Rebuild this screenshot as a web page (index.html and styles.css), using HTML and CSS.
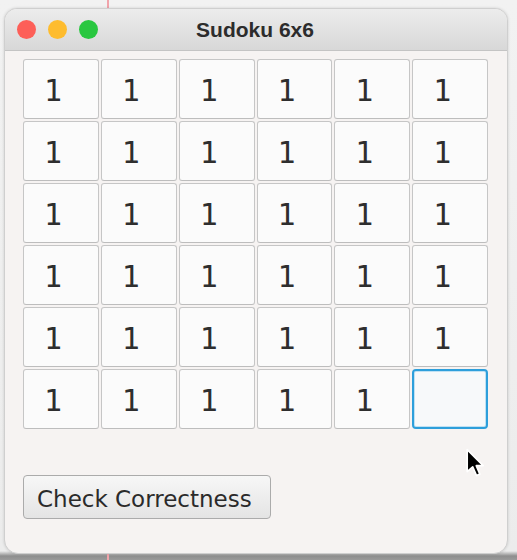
FILE: index.html
```html
<!DOCTYPE html>
<html>
<head>
<meta charset="utf-8">
<link rel="stylesheet" href="styles.css">
</head>
<body>
<div class="guide"></div>
<div class="window">
  <div class="titlebar">
    <div class="lights">
      <span class="light red"></span>
      <span class="light yellow"></span>
      <span class="light green"></span>
    </div>
    <div class="title">Sudoku 6x6</div>
  </div>
  <div class="content">
    <div class="grid">
      <div class="cell">1</div><div class="cell">1</div><div class="cell">1</div><div class="cell">1</div><div class="cell">1</div><div class="cell">1</div>
      <div class="cell">1</div><div class="cell">1</div><div class="cell">1</div><div class="cell">1</div><div class="cell">1</div><div class="cell">1</div>
      <div class="cell">1</div><div class="cell">1</div><div class="cell">1</div><div class="cell">1</div><div class="cell">1</div><div class="cell">1</div>
      <div class="cell">1</div><div class="cell">1</div><div class="cell">1</div><div class="cell">1</div><div class="cell">1</div><div class="cell">1</div>
      <div class="cell">1</div><div class="cell">1</div><div class="cell">1</div><div class="cell">1</div><div class="cell">1</div><div class="cell">1</div>
      <div class="cell">1</div><div class="cell">1</div><div class="cell">1</div><div class="cell">1</div><div class="cell">1</div><div class="cell focused"></div>
    </div>
    <button class="check">Check Correctness</button>
  </div>
  <svg class="cursor" width="22" height="32" viewBox="0 0 20 28">
    <path d="M2 1 L2 21 L7 16.5 L10.5 24.5 L13.5 23.2 L10.2 15.5 L16.5 15.5 Z" fill="#000" stroke="#fff" stroke-width="1.5" stroke-linejoin="round"/>
  </svg>
</div>
</body>
</html>
```

FILE: styles.css
```css
html, body {
  margin: 0;
  padding: 0;
}
body {
  width: 517px;
  height: 560px;
  background: linear-gradient(to bottom, #f2f2f2 0, #ececec 551px, #8e8e8e 556px, #9a9a9a 560px);
  position: relative;
  overflow: hidden;
  padding-top: 8px;
  box-sizing: border-box;
}
.guide {
  position: absolute;
  left: 107px;
  top: 0;
  width: 2px;
  height: 560px;
  background: #f1a4ab;
}
.window {
  position: relative;
  margin-left: 4px;
  width: 504px;
  height: 546px;
  background: #f6f3f2;
  border: 1px solid #cfcfcf;
  box-sizing: border-box;
  border-radius: 13px 13px 14px 14px;
  overflow: hidden;
  box-shadow: 0 0 3px rgba(0,0,0,0.15);
}
.titlebar {
  height: 41px;
  background: linear-gradient(to bottom, #ececec, #d8d8d8);
  border-bottom: 1px solid #c4c4c4;
  display: flex;
  align-items: center;
  position: relative;
}
.lights {
  display: flex;
  gap: 12px;
  padding-left: 12px;
  margin-top: -1px;
}
.light {
  width: 19px;
  height: 19px;
  border-radius: 50%;
  display: block;
}
.red { background: #fd5f58; }
.yellow { background: #febc2e; }
.green { background: #29c740; }
.title {
  position: absolute;
  left: 0;
  right: 0;
  top: 0;
  bottom: 0;
  display: flex;
  align-items: center;
  justify-content: center;
  font-family: "Liberation Sans", Arial, sans-serif;
  font-weight: bold;
  font-size: 21px;
  color: #2c2c2c;
  padding-right: 2px;
}
.content {
  padding: 8px 0 0 18px;
}
.grid {
  display: grid;
  grid-template-columns: repeat(6, 1fr);
  grid-auto-rows: 60px;
  gap: 2px;
  width: 465px;
}
.cell {
  background: #fbfbfb;
  border: 1px solid #c6c6c6;
  border-bottom-color: #bdbdbd;
  border-radius: 3px;
  font-family: "DejaVu Sans Mono", monospace;
  font-size: 30px;
  color: #2e2e2e;
  display: flex;
  align-items: center;
  padding-left: 20px;
  padding-top: 2px;
  box-sizing: border-box;
}
.cell.focused {
  border: 2px solid #2d9fdb;
  border-radius: 4px;
  background: #f7f9fa;
  box-shadow: inset 0 0 0 1px #bfe1f3;
}
.check {
  margin-top: 46px;
  width: 248px;
  height: 44px;
  border: 1px solid #ababab;
  border-radius: 4px;
  background: linear-gradient(to bottom, #f7f7f7, #e4e4e4);
  font-family: "DejaVu Sans", Verdana, sans-serif;
  font-size: 23px;
  color: #2a2a2a;
  text-align: left;
  padding: 3px 0 0 13px;
  display: block;
}
.cursor {
  position: absolute;
  left: 460px;
  top: 439px;
}
```
